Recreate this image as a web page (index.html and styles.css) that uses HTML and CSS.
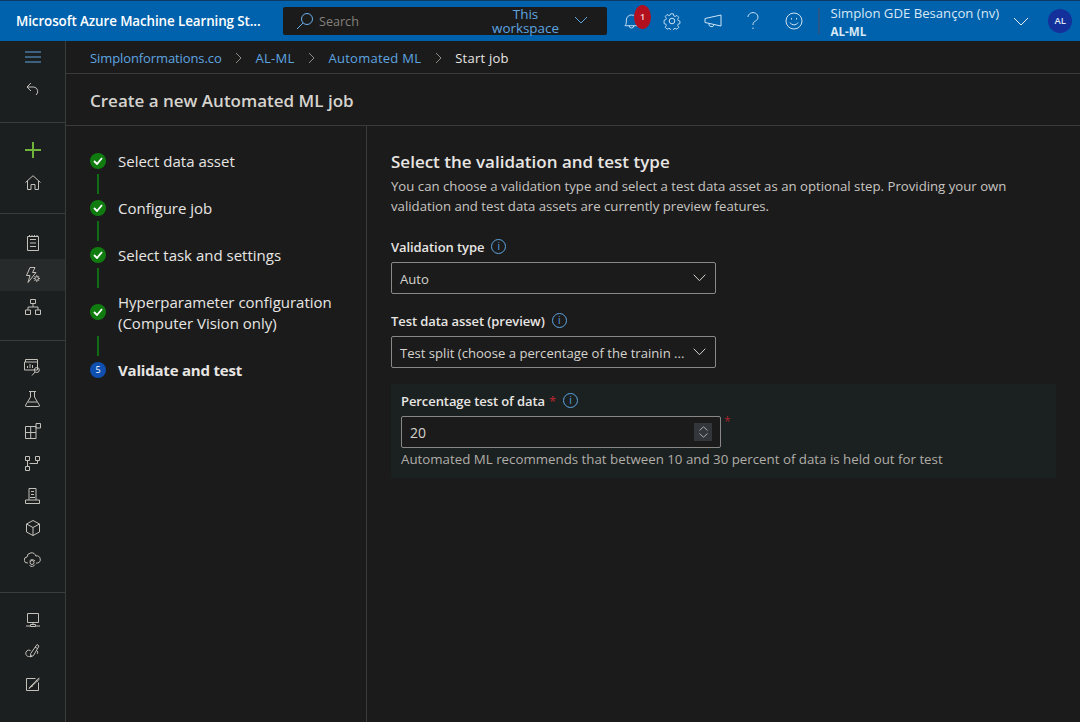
FILE: index.html
```html
<!DOCTYPE html>
<html lang="en">
<head>
    <meta charset="UTF-8">
    <title>Start job - Azure Machine Learning</title>
    <link rel="stylesheet" href="styles.css">
</head>
<body>
    <header class="topbar">
        <div class="brand">Microsoft Azure Machine Learning St...</div>
        <div class="search">
            <svg class="search-icon" width="20" height="20" viewBox="0 0 20 20"><circle cx="12" cy="8" r="5.5"/><path d="M8 12 2 18"/></svg>
            <span class="search-text">Search</span>
            <span class="scope">This workspace</span>
            <svg class="scope-chevron" width="14" height="8" viewBox="0 0 14 8"><path d="M1 1l6 6 6-6"/></svg>
        </div>
        <div class="tools">
            <div class="tool bell">
                <svg width="15" height="17" viewBox="0 0 16 18"><path d="M1 13.5c1.5-1.5 1.5-3 1.5-6a5.5 5.5 0 0 1 11 0c0 3 0 4.5 1.5 6zM5.5 13.5a2.5 2.5 0 0 0 5 0"/></svg>
                <span class="badge">1</span>
            </div>
            <div class="tool">
                <svg width="18" height="18" viewBox="0 0 18 18"><circle cx="9" cy="9" r="2.8"/><path d="M7.5 1h3l.5 2.3 1.500.7 2-1.200 2 2.200-1.200 2 .5 1.500 2 .6v2.800l-2 .6-.5 1.500 1.200 2-2 2.200-2-1.200-1.500.7-.5 2.300h-3l-.5-2.300-1.500-.7-2 1.200-2-2.200 1.200-2-.5-1.500-2-.6V8.100l2-.6.5-1.500-1.200-2 2-2.200 2 1.200 1.500-.7z" transform="translate(.9 .9) scale(.9)"/></svg>
            </div>
            <div class="tool">
                <svg width="18" height="14" viewBox="0 0 18 14"><path d="M1 4.5 17 1v11L1 8.5zM5 9.500a2.500 2.500 0 0 0 5 1.300"/></svg>
            </div>
            <div class="tool">
                <svg width="12" height="18" viewBox="0 0 12 18"><path d="M1 5a5 4.500 0 1 1 7.500 4C6.500 10 6 11 6 13"/><path d="M6 15.500v1.500"/></svg>
            </div>
            <div class="tool">
                <svg width="18" height="18" viewBox="0 0 18 18"><circle cx="9" cy="9" r="8"/><path d="M5 10.500a4.500 4.500 0 0 0 8 0M6.500 6v1.500M11.500 6v1.500"/></svg>
            </div>
        </div>
        <div class="account">
            <div class="account-name">Simplon GDE Besançon (nv)</div>
            <div class="account-space">AL-ML</div>
        </div>
        <svg class="account-chevron" width="16" height="9" viewBox="0 0 16 9"><path d="M1 1l7 7 7-7"/></svg>
        <div class="avatar">AL</div>
    </header>

    <div class="shell">
        <nav class="sidenav">
            <div class="nav-group first">
                <div class="nav-item"><svg width="16" height="12" viewBox="0 0 16 12"><path class="blue" d="M0 1h16M0 6h16M0 11h16"/></svg></div>
                <div class="nav-item"><svg width="14" height="14" viewBox="0 0 14 14"><path d="M5 1 1 5l4 4M1 5h7a4.500 4.500 0 0 1 2 8"/></svg></div>
            </div>
            <div class="nav-group second">
                <div class="nav-item"><svg width="16" height="16" viewBox="0 0 16 16"><path class="green" d="M8 0v16M0 8h16"/></svg></div>
                <div class="nav-item"><svg width="16" height="15" viewBox="0 0 16 15"><path d="M.5 7.500 8 .7l7.500 6.800M2.500 6v8.500h3.500V9.500h4v5h3.500V6"/></svg></div>
            </div>
            <div class="nav-group third">
                <div class="nav-item"><svg width="12" height="16" viewBox="0 0 12 16"><path d="M.5 1.500h11v14H.5zM3 4.500h6M3 8h6M3 11.500h6M2.500 0v1.500M5 0v1.500M7.500 0v1.500M10 0v1.500"/></svg></div>
                <div class="nav-item active"><svg width="16" height="16" viewBox="0 0 16 16"><path d="M5 .5h5L7.500 5.500H11L3 15.500 5 8.500H1.500z"/><circle cx="11.800" cy="11.500" r="1.800"/><path d="M11.800 8v1.500M11.800 13.500V15M8.500 11.500H10M13.500 11.500H15M9.500 9.200l1 1M13 12.800l1 1M14 9.200l-1 1M10.500 12.800l-1 1"/></svg></div>
                <div class="nav-item"><svg width="16" height="16" viewBox="0 0 16 16"><path d="M5.500.5h5v4h-5zM.5 11h5v4.500h-5zM10.500 11h5v4.500h-5zM8 4.500V8M3 11V8h10v3"/></svg></div>
            </div>
            <div class="nav-group fourth">
                <div class="nav-item"><svg width="17" height="17" viewBox="0 0 17 17"><path d="M1.500 3V.5h12V3M.5 3h13v8H.5zM3.500 9V7M6 9V5M8.500 9V6"/><circle cx="12.800" cy="11" r="2.500"/><path d="M11 13l-3 3.500"/></svg></div>
                <div class="nav-item"><svg width="15" height="16" viewBox="0 0 15 16"><path d="M4 .5h7M5.500.5V6L.7 14a1 1 0 0 0 .8 1.500h12a1 1 0 0 0 .8-1.500L9.500 6V.5M3 11h9"/></svg></div>
                <div class="nav-item"><svg width="16" height="16" viewBox="0 0 16 16"><path d="M.5 3.500h10.500v12H.5zM.5 9.500H11M5.700 3.500v12M11 .5h4.500v4.500H11z"/></svg></div>
                <div class="nav-item"><svg width="15" height="15" viewBox="0 0 15 15"><path d="M.5.500h4v4h-4zM10.500.500h4v4h-4zM.5 10.500h4v4h-4zM2.500 4.500v6M4.500 7.500h8V4.500"/></svg></div>
                <div class="nav-item"><svg width="15" height="16" viewBox="0 0 15 16"><path d="M4 .5h7v11.500H4zM6 3.500h3M6 6.500h3M4 12l-3.500 0v3.500h14V12H11M5 9.500h5"/></svg></div>
                <div class="nav-item"><svg width="14" height="16" viewBox="0 0 14 16"><path d="M7 .5l6.500 3.500v8L7 15.500.5 12V4zM.5 4 7 7.500 13.500 4M7 7.500v8"/></svg></div>
                <div class="nav-item"><svg width="17" height="16" viewBox="0 0 17 16"><path d="M4 11H3.500a3 3 0 0 1-.5-6 4.500 4.500 0 0 1 8.800-1 3.500 3.500 0 0 1 1.700 7H12"/><circle cx="8" cy="10.500" r="2"/><path d="M5.500 9a3.500 3.500 0 0 1 5.500 0M11 12.500a3.500 3.500 0 0 1-5.500 1"/></svg></div>
            </div>
            <div class="nav-group fifth">
                <div class="nav-item"><svg width="14" height="14" viewBox="0 0 14 14"><path d="M1.500.500h11v9h-11zM7 9.500v2M4.500 11.500h5v2h-5zM0 13h4.500M9.500 13H14"/></svg></div>
                <div class="nav-item"><svg width="16" height="16" viewBox="0 0 16 16"><path d="M12 .5l2 1.500-5.500 9.500-3 1.500.2-3.500zM10 3l2.500 1.500M5.500 6.500a3.200 3.200 0 0 0-4.500 4c.8 2.500 4 2.500 6 1M11.500 6.500a2 2 0 0 1 .5 3.500"/></svg></div>
                <div class="nav-item"><svg width="14" height="14" viewBox="0 0 14 14"><path d="M12.500 5.500v8H.5v-12h9"/><path d="M13 .8 4 10l-1 1.500 1.500-1L13.500 2"/><path d="M10 3l1.500 1.500M5 8l1.500 1.500"/></svg></div>
            </div>
        </nav>

        <main class="content">
            <div class="breadcrumb">
                <a class="crumb-root">Simplonformations.co</a>
                <svg class="crumb-sep" width="7" height="12" viewBox="0 0 7 12"><path d="M1 1l5 5-5 5"/></svg>
                <a>AL-ML</a>
                <svg class="crumb-sep" width="7" height="12" viewBox="0 0 7 12"><path d="M1 1l5 5-5 5"/></svg>
                <a>Automated ML</a>
                <svg class="crumb-sep" width="7" height="12" viewBox="0 0 7 12"><path d="M1 1l5 5-5 5"/></svg>
                <span>Start job</span>
            </div>
            <h1 class="page-title">Create a new Automated ML job</h1>
            <div class="wizard">
                <ol class="steps">
                    <li class="step">
                        <span class="step-dot"><svg width="10" height="8" viewBox="0 0 10 8"><path d="M1 4l3 3 5-6"/></svg></span>
                        <span class="step-label">Select data asset</span>
                    </li>
                    <li class="step-line"></li>
                    <li class="step">
                        <span class="step-dot"><svg width="10" height="8" viewBox="0 0 10 8"><path d="M1 4l3 3 5-6"/></svg></span>
                        <span class="step-label">Configure job</span>
                    </li>
                    <li class="step-line"></li>
                    <li class="step">
                        <span class="step-dot"><svg width="10" height="8" viewBox="0 0 10 8"><path d="M1 4l3 3 5-6"/></svg></span>
                        <span class="step-label">Select task and settings</span>
                    </li>
                    <li class="step-line"></li>
                    <li class="step">
                        <span class="step-dot"><svg width="10" height="8" viewBox="0 0 10 8"><path d="M1 4l3 3 5-6"/></svg></span>
                        <span class="step-label">Hyperparameter configuration<br>(Computer Vision only)</span>
                    </li>
                    <li class="step-line"></li>
                    <li class="step current">
                        <span class="step-dot">5</span>
                        <span class="step-label">Validate and test</span>
                    </li>
                </ol>
                <section class="panel">
                    <h2 class="panel-title">Select the validation and test type</h2>
                    <p class="panel-text">You can choose a validation type and select a test data asset as an optional step. Providing your own validation and test data assets are currently preview features.</p>

                    <div class="field-label first-label">Validation type <span class="info">i</span></div>
                    <div class="select">
                        <span class="select-text">Auto</span>
                        <svg width="13" height="8" viewBox="0 0 13 8"><path d="M.7.700l5.800 6 5.800-6"/></svg>
                    </div>

                    <div class="field-label">Test data asset (preview) <span class="info">i</span></div>
                    <div class="select">
                        <span class="select-text">Test split (choose a percentage of the trainin ...</span>
                        <svg width="13" height="8" viewBox="0 0 13 8"><path d="M.7.700l5.800 6 5.800-6"/></svg>
                    </div>

                    <div class="percent-box">
                        <div class="field-label tight">Percentage test of data <span class="req">*</span> <span class="info">i</span></div>
                        <div class="number-row">
                            <div class="number-input">
                                <span>20</span>
                                <span class="spinner">
                                    <svg width="9" height="5" viewBox="0 0 9 5"><path d="M.5 4.500 4.500.8l4 3.700"/></svg>
                                    <svg width="9" height="5" viewBox="0 0 9 5"><path d="M.5.500l4 3.700 4-3.700"/></svg>
                                </span>
                            </div>
                            <span class="req outer">*</span>
                        </div>
                        <div class="hint">Automated ML recommends that between 10 and 30 percent of data is held out for test</div>
                    </div>
                </section>
            </div>
        </main>
    </div>
</body>
</html>
```

FILE: styles.css
```css
* {
    box-sizing: border-box;
}

body {
    margin: 0;
    height: 722px;
    overflow: hidden;
    background-color: #1b1b1c;
    color: #e8e6e3;
    font-family: "Open Sans", "Noto Sans", sans-serif;
    font-size: 14px;
    display: flex;
    flex-direction: column;
}

svg {
    fill: none;
    stroke: currentColor;
    stroke-width: 1;
    display: block;
}

/* top bar */
.topbar {
    height: 41px;
    flex: none;
    display: flex;
    align-items: center;
    background-color: #0062ad;
    border-top: 1px solid #0c3a63;
    color: #fff;
}

.brand {
    width: 283px;
    padding-left: 16px;
    font-size: 13.4px;
    font-weight: 600;
    white-space: nowrap;
    letter-spacing: -0.1px;
}

.search {
    width: 324px;
    height: 28px;
    background-color: #1b1b1c;
    border-radius: 2px;
    display: flex;
    align-items: center;
    position: relative;
    color: #5ea5e0;
}

.search-icon {
    margin-left: 12px;
    color: #6cb0ea;
}

.search-text {
    margin-left: 4px;
    font-size: 12.6px;
    color: #85817b;
}

.scope {
    position: absolute;
    left: 200px;
    top: 0;
    width: 85px;
    text-align: center;
    font-size: 13.4px;
    line-height: 14px;
    color: #5ea5e0;
}

.scope-chevron {
    position: absolute;
    right: 19px;
    top: 9px;
    color: #5ea5e0;
}

.tools {
    display: flex;
    align-items: center;
    margin-left: 4px;
    color: #cfe4f5;
}

.tool {
    width: 40.7px;
    display: flex;
    justify-content: center;
    position: relative;
}

.badge {
    position: absolute;
    left: 23px;
    top: -8px;
    width: 17px;
    height: 24px;
    border-radius: 50%;
    background-color: #b3101f;
    color: #f5d5d5;
    font-size: 9px;
    font-weight: 600;
    line-height: 24px;
    text-align: center;
}

.account {
    margin-left: 4px;
    padding-left: 10px;
    height: 26px;
    border-left: 2px solid #27578a;
    display: flex;
    flex-direction: column;
    justify-content: center;
    color: #d8e8f5;
}

.account-name {
    font-size: 13.15px;
    line-height: 18px;
    white-space: nowrap;
}

.account-space {
    font-size: 11.6px;
    font-weight: 700;
    line-height: 15px;
    margin-top: 2px;
}

.account-chevron {
    margin-left: 14px;
    color: #e3eef8;
}

.avatar {
    width: 24px;
    height: 24px;
    margin-left: 19px;
    border-radius: 50%;
    background-color: #14309a;
    color: #dfe6f5;
    font-size: 9.5px;
    font-weight: 600;
    line-height: 24px;
    text-align: center;
}

/* left nav */
.shell {
    flex: 1;
    display: flex;
    min-height: 0;
}

.sidenav {
    width: 66px;
    flex: none;
    background-color: #1b1f20;
    border-right: 1px solid #3a3d3e;
    color: #c4c0ba;
}

.nav-group {
    border-bottom: 1px solid #3a3d3e;
}

.nav-group.first {
    height: 82px;
}

.nav-group.second {
    height: 91px;
    padding-top: 11px;
}

.nav-group.third {
    height: 127px;
    padding-top: 13px;
}

.nav-group.fourth {
    height: 252px;
    padding-top: 10px;
}

.nav-group.fifth {
    border-bottom: none;
    padding-top: 11px;
}

.nav-item {
    height: 32.2px;
    display: flex;
    align-items: center;
    justify-content: center;
}

.nav-item.active {
    background-color: #272a2b;
}

.blue {
    stroke: #5ea5e0;
}

.green {
    stroke: #6fb33a;
    stroke-width: 2;
}

/* main */
.content {
    flex: 1;
    display: flex;
    flex-direction: column;
    min-width: 0;
}

.breadcrumb {
    height: 33px;
    flex: none;
    padding: 2px 0 0 24px;
    display: flex;
    align-items: center;
    border-bottom: 1px solid #3c3b3a;
    font-size: 13px;
    letter-spacing: 0.25px;
    color: #e8e6e3;
}

.breadcrumb a {
    color: #5ea5e0;
}

.breadcrumb .crumb-root {
    letter-spacing: -0.1px;
}

.crumb-sep {
    margin: 0 13.5px;
    color: #8f8b85;
}

.page-title {
    height: 52px;
    flex: none;
    margin: 0;
    padding: 2px 0 0 24px;
    display: flex;
    align-items: center;
    border-bottom: 1px solid #3c3b3a;
    font-size: 17px;
    font-weight: 600;
    color: #d6d3ce;
}

.wizard {
    flex: 1;
    display: flex;
    min-height: 0;
}

/* steps */
.steps {
    width: 301px;
    flex: none;
    margin: 0;
    padding: 24px 0 0 24px;
    list-style: none;
    border-right: 1px solid #3c3b3a;
}

.step {
    display: flex;
    align-items: center;
    font-size: 15px;
    line-height: 21px;
    color: #e8e6e3;
}

.step-dot {
    width: 16px;
    height: 16px;
    flex: none;
    margin-right: 12px;
    border-radius: 50%;
    background-color: #107c10;
    color: #fff;
    display: flex;
    align-items: center;
    justify-content: center;
    font-size: 9px;
}

.step-dot svg {
    stroke-width: 1.8;
}

.step-label {
    margin: 1px 0 -1px;
}

.step-line {
    width: 2px;
    height: 20px;
    margin: 3px 0 3px 7px;
    background-color: #0f6b14;
}

.step.current .step-dot {
    background-color: #0f4fb0;
}

.step.current .step-label {
    font-weight: 700;
    letter-spacing: -0.2px;
}

/* form panel */
.panel {
    flex: 1;
    min-width: 0;
    padding: 25px 24px 0;
}

.panel-title {
    margin: 0;
    font-size: 17px;
    font-weight: 600;
    line-height: 22px;
    color: #e8e6e3;
}

.panel-text {
    margin: 3px 0 0;
    width: 640px;
    font-size: 13.2px;
    line-height: 20px;
    color: #c8c5c0;
}

.field-label {
    margin: 15px 0 3px;
    height: 24px;
    display: flex;
    align-items: center;
    gap: 4px;
    font-size: 13px;
    font-weight: 600;
    letter-spacing: -0.08px;
    color: #e8e6e3;
}

.field-label.first-label {
    margin-top: 19px;
}

.field-label.tight {
    margin: 0;
    height: 32px;
    padding-top: 2px;
}

.info {
    width: 15px;
    height: 15px;
    margin-left: 3px;
    margin-top: -2px;
    border: 1px solid #5ea5e0;
    border-radius: 50%;
    color: #5ea5e0;
    font-size: 10px;
    font-weight: 400;
    line-height: 13px;
    text-align: center;
}

.select {
    width: 325px;
    height: 32px;
    padding: 0 9px 0 8px;
    display: flex;
    align-items: center;
    justify-content: space-between;
    border: 1px solid #8a8886;
    border-radius: 2px;
    font-size: 13.1px;
    color: #d6d3ce;
}

.select-text {
    white-space: nowrap;
    margin-top: 1px;
}

.percent-box {
    width: 665px;
    height: 94px;
    margin-top: 16px;
    padding: 0 10px;
    background-color: #1b2021;
}

.req {
    color: #a4262c;
}

.number-row {
    display: flex;
    align-items: flex-start;
}

.number-input {
    width: 320px;
    height: 32px;
    padding: 0 8px;
    display: flex;
    align-items: center;
    justify-content: space-between;
    background-color: #1b1b1c;
    border: 1px solid #8a8886;
    border-radius: 2px;
    font-size: 14px;
    color: #d6d3ce;
}

.spinner {
    width: 18px;
    height: 18px;
    background-color: #33363a;
    display: flex;
    flex-direction: column;
    align-items: center;
    justify-content: center;
    gap: 2px;
    color: #b0aea9;
}

.req.outer {
    margin-left: 3px;
    font-size: 12px;
    line-height: 12px;
}

.hint {
    margin-top: 2px;
    font-size: 13.3px;
    line-height: 18px;
    white-space: nowrap;
    color: #b0ada7;
}
```
